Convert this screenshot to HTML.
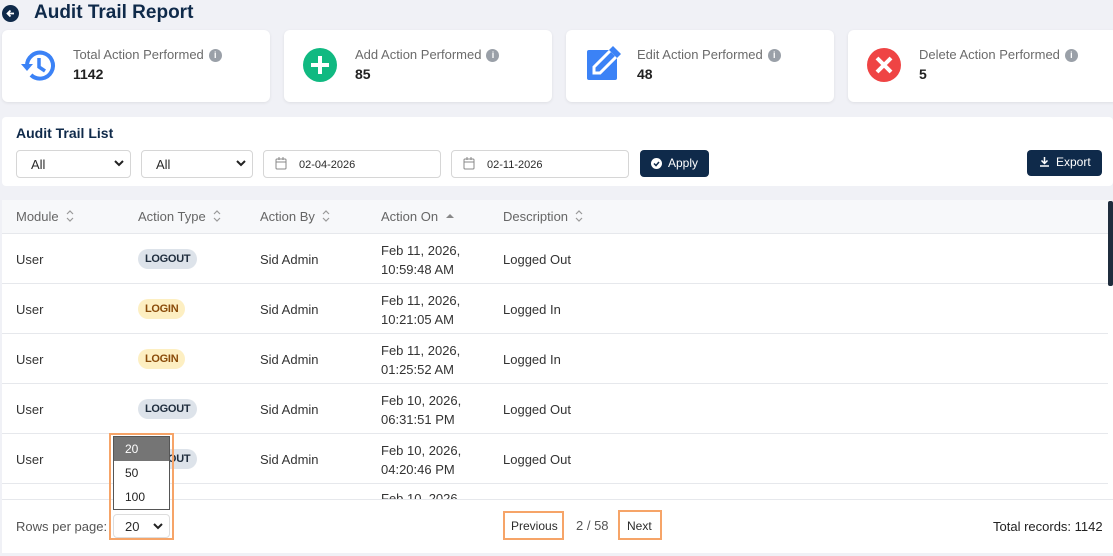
<!DOCTYPE html>
<html><head><meta charset="utf-8"><style>
*{box-sizing:border-box;margin:0;padding:0}
body{width:1113px;height:556px;overflow:hidden;background:#f0f1f6;font-family:"Liberation Sans",sans-serif;position:relative;color:#2b2b2b}
.abs{position:absolute}
.title{left:34px;top:2px;font-size:19px;font-weight:bold;color:#0f2a4a}
.back{left:2px;top:5px;width:17px;height:17px;border-radius:50%;background:#0f2a4a}
.card{top:30px;height:72px;background:#fff;border-radius:6px;box-shadow:0 1px 3px rgba(0,0,0,.08)}
.card .lbl{position:absolute;left:71px;top:17px;font-size:13px;color:#6b6b6b}
.card .num{position:absolute;left:71px;top:36px;font-size:14px;font-weight:bold;color:#222}
.info{display:inline-block;width:13px;height:13px;border-radius:50%;background:#9aa0a8;color:#fff;font-size:9px;text-align:center;line-height:13px;font-weight:bold;margin-left:5px;vertical-align:1px}
.ic{position:absolute;left:17px;top:16px}
.panel{background:#fff;border-radius:4px}
.sel{top:150px;height:28px;border:1px solid #d6d6d6;border-radius:4px;background:#fff;font-size:13px;padding:6px 0 0 14px}
.chev{position:absolute;right:6px;top:9px}
.date{top:150px;height:28px;border:1px solid #d6d6d6;border-radius:4px;background:#fff;font-size:11px;padding:8px 0 0 35px}
.btn{background:#0f2a4a;color:#fff;border-radius:4px;font-size:12px;height:27px}
.th{top:209px;font-size:13px;color:#666}
.th svg{margin-left:7px;vertical-align:-2px}
.row{left:2px;width:1106px;height:50px;border-bottom:1px solid #e6e8ec}
.c{position:absolute;font-size:13px;color:#333}
.pill{position:absolute;left:136px;top:15px;height:20px;border-radius:10px;font-size:11px;font-weight:bold;padding:4px 7px 0;letter-spacing:-.3px}
.lo{background:#dde3ea;color:#1f2d3d}
.li{background:#fdefc2;color:#8a4b0a}
</style></head><body>
<div class="abs back"><svg width="17" height="17" viewBox="0 0 17 17"><path d="M12 8.5H5.5M8.5 5.5L5.5 8.5L8.5 11.5" stroke="#fff" stroke-width="1.8" fill="none"/></svg></div>
<div class="abs title">Audit Trail Report</div>

<div class="abs card" style="left:2px;width:268px">
<svg class="ic" width="40" height="40" viewBox="0 0 40 40"><path d="M8 20A13 13 0 1 1 12 29" stroke="#3b82f6" stroke-width="4" fill="none"/><path d="M2 18L8 25L14 18Z" fill="#3b82f6"/><path d="M20 12V21L26 25" stroke="#3b82f6" stroke-width="3.5" fill="none"/></svg>
<div class="lbl">Total Action Performed<span class="info">i</span></div><div class="num">1142</div></div>
<div class="abs card" style="left:284px;width:268px">
<svg class="ic" width="38" height="38" viewBox="0 0 38 38" style="left:17px;top:16px"><circle cx="19" cy="19" r="17" fill="#10b981"/><path d="M19 10V28M10 19H28" stroke="#fff" stroke-width="4"/></svg>
<div class="lbl">Add Action Performed<span class="info">i</span></div><div class="num">85</div></div>
<div class="abs card" style="left:566px;width:268px">
<svg class="ic" width="38" height="38" viewBox="0 0 38 38" style="left:19px;top:14px"><rect x="2" y="6" width="30" height="30" rx="2" fill="#3b82f6"/><path d="M9 29V23L26 6L32 12L15 29Z" fill="#3b82f6" stroke="#fff" stroke-width="3"/><path d="M28 2L36 10L32 14L24 6Z" fill="#3b82f6"/></svg>
<div class="lbl">Edit Action Performed<span class="info">i</span></div><div class="num">48</div></div>
<div class="abs card" style="left:848px;width:270px">
<svg class="ic" width="36" height="36" viewBox="0 0 36 36" style="left:18px;top:17px"><circle cx="18" cy="18" r="17" fill="#ef4444"/><path d="M11 11L25 25M25 11L11 25" stroke="#fff" stroke-width="4"/></svg>
<div class="lbl">Delete Action Performed<span class="info">i</span></div><div class="num">5</div></div>

<div class="abs panel" style="left:2px;top:117px;width:1111px;height:69px"></div>
<div class="abs" style="left:16px;top:125px;font-size:14px;font-weight:bold;color:#0f2a4a">Audit Trail List</div>
<div class="abs sel" style="left:16px;width:115px">All<svg class="chev" width="10" height="7"><path d="M1 1L5 5L9 1" stroke="#222" stroke-width="2" fill="none"/></svg></div>
<div class="abs sel" style="left:141px;width:112px">All<svg class="chev" width="10" height="7"><path d="M1 1L5 5L9 1" stroke="#222" stroke-width="2" fill="none"/></svg></div>
<div class="abs date" style="left:263px;width:178px">02-04-2026</div>
<div class="abs date" style="left:451px;width:178px">02-11-2026</div>
<svg class="abs" style="left:275px;top:157px" width="12" height="13"><rect x="1" y="2" width="10" height="10" rx="1" stroke="#888" fill="none"/><path d="M1 5H11M4 0V3M8 0V3" stroke="#888"/></svg>
<svg class="abs" style="left:463px;top:157px" width="12" height="13"><rect x="1" y="2" width="10" height="10" rx="1" stroke="#888" fill="none"/><path d="M1 5H11M4 0V3M8 0V3" stroke="#888"/></svg>
<div class="abs btn" style="left:640px;top:150px;width:69px;padding:6px 0 0 28px">Apply</div>
<svg class="abs" style="left:651px;top:158px" width="11" height="11"><circle cx="5.5" cy="5.5" r="5.5" fill="#fff"/><path d="M3 5.5L5 7.5L8 4" stroke="#0f2a4a" stroke-width="1.5" fill="none"/></svg>
<div class="abs btn" style="left:1027px;top:150px;width:75px;height:26px;padding:5px 0 0 29px">Export</div>
<svg class="abs" style="left:1040px;top:157px" width="9" height="10"><path d="M4.5 0V6M1.5 3.5L4.5 6.5L7.5 3.5M0 9H9" stroke="#fff" stroke-width="1.5" fill="none"/></svg>

<div class="abs panel" style="left:2px;top:200px;width:1111px;height:353px"></div>
<div class="abs" style="left:2px;top:200px;width:1106px;height:34px;background:#f7f8fa;border-bottom:1px solid #e6e8ec"></div>
<div class="abs th" style="left:16px">Module<svg width="8" height="14"><path d="M1 5L4 2L7 5M1 9L4 12L7 9" stroke="#999" stroke-width="1.2" fill="none"/></svg></div>
<div class="abs th" style="left:138px">Action Type<svg width="8" height="14"><path d="M1 5L4 2L7 5M1 9L4 12L7 9" stroke="#999" stroke-width="1.2" fill="none"/></svg></div>
<div class="abs th" style="left:260px">Action By<svg width="8" height="14"><path d="M1 5L4 2L7 5M1 9L4 12L7 9" stroke="#999" stroke-width="1.2" fill="none"/></svg></div>
<div class="abs th" style="left:381px">Action On<svg width="10" height="14"><path d="M1 9L5 5L9 9Z" fill="#888"/></svg></div>
<div class="abs th" style="left:503px">Description<svg width="8" height="14"><path d="M1 5L4 2L7 5M1 9L4 12L7 9" stroke="#999" stroke-width="1.2" fill="none"/></svg></div>
<div class="abs" style="left:1108px;top:201px;width:5px;height:85px;background:#1f2d3d;border-radius:2px"></div>

<div class="abs row" style="top:234px"><span class="c" style="left:14px;top:18px">User</span><span class="pill lo">LOGOUT</span><span class="c" style="left:258px;top:18px">Sid Admin</span><span class="c" style="left:379px;top:7px;line-height:19px">Feb 11, 2026,<br>10:59:48 AM</span><span class="c" style="left:501px;top:18px">Logged Out</span></div>
<div class="abs row" style="top:284px"><span class="c" style="left:14px;top:18px">User</span><span class="pill li">LOGIN</span><span class="c" style="left:258px;top:18px">Sid Admin</span><span class="c" style="left:379px;top:7px;line-height:19px">Feb 11, 2026,<br>10:21:05 AM</span><span class="c" style="left:501px;top:18px">Logged In</span></div>
<div class="abs row" style="top:334px"><span class="c" style="left:14px;top:18px">User</span><span class="pill li">LOGIN</span><span class="c" style="left:258px;top:18px">Sid Admin</span><span class="c" style="left:379px;top:7px;line-height:19px">Feb 11, 2026,<br>01:25:52 AM</span><span class="c" style="left:501px;top:18px">Logged In</span></div>
<div class="abs row" style="top:384px"><span class="c" style="left:14px;top:18px">User</span><span class="pill lo">LOGOUT</span><span class="c" style="left:258px;top:18px">Sid Admin</span><span class="c" style="left:379px;top:7px;line-height:19px">Feb 10, 2026,<br>06:31:51 PM</span><span class="c" style="left:501px;top:18px">Logged Out</span></div>
<div class="abs row" style="top:434px"><span class="c" style="left:14px;top:18px">User</span><span class="pill lo">LOGOUT</span><span class="c" style="left:258px;top:18px">Sid Admin</span><span class="c" style="left:379px;top:7px;line-height:19px">Feb 10, 2026,<br>04:20:46 PM</span><span class="c" style="left:501px;top:18px">Logged Out</span></div>
<div class="abs" style="left:2px;top:484px;width:1106px;height:15px;overflow:hidden"><span class="c" style="left:379px;top:7px">Feb 10, 2026,</span></div>
<div class="abs" style="left:2px;top:499px;width:1111px;height:54px;background:#fff;border-top:1px solid #e6e8ec"></div>

<div class="abs" style="left:16px;top:519px;font-size:13px;color:#555">Rows per page:</div>
<div class="abs" style="left:109px;top:433px;width:65px;height:107px;border:2px solid #f6a468"></div>
<div class="abs" style="left:113px;top:436px;width:57px;height:74px;border:1px solid #555;background:#fff;font-size:12px;color:#222">
<div style="background:#757575;color:#fff;height:24px;padding:5px 0 0 11px">20</div>
<div style="height:24px;padding:5px 0 0 11px">50</div>
<div style="height:24px;padding:5px 0 0 11px">100</div></div>
<div class="abs" style="left:113px;top:514px;width:57px;height:24px;border:1px solid #ddd;border-radius:4px;font-size:13px;padding:4px 0 0 11px">20<svg style="position:absolute;right:6px;top:8px" width="10" height="7"><path d="M1 1L5 5L9 1" stroke="#222" stroke-width="2" fill="none"/></svg></div>
<div class="abs" style="left:503px;top:511px;width:61px;height:29px;border:2px solid #f6a468;font-size:12px;padding:6px 0 0 6px">Previous</div>
<div class="abs" style="left:576px;top:518px;font-size:13px;color:#555">2 / 58</div>
<div class="abs" style="left:618px;top:510px;width:44px;height:30px;border:2px solid #f6a468;font-size:12px;padding:7px 0 0 7px">Next</div>
<div class="abs" style="left:993px;top:519px;font-size:13px;color:#222">Total records: 1142</div>
</body></html>
